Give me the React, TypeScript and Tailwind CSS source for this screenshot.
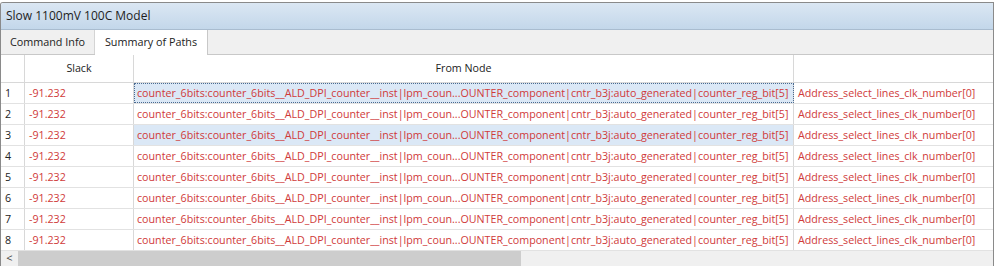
import React from "react";

const rows = [1, 2, 3, 4, 5, 6, 7, 8];
const node =
  "counter_6bits:counter_6bits__ALD_DPI_counter__inst|lpm_coun...OUNTER_component|cntr_b3j:auto_generated|counter_reg_bit[5]";

export default function App() {
  return (
    <div
      className="w-[999px] h-[266px] bg-white overflow-hidden"
      style={{ fontFamily: '"Open Sans", "Noto Sans", sans-serif' }}
    >
      <div className="mt-[2px] w-[994px] h-[264px] border-l border-t border-r border-[#8a8a8a] rounded-tl-[3px] flex flex-col overflow-hidden">
        <div className="h-[27px] shrink-0 bg-gradient-to-b from-[#dbe7f3] to-[#c3d7ea] border-b border-[#a9bccf] flex items-center pl-[5px] text-[12px] text-[#1e1e1e]">
          Slow 1100mV 100C Model
        </div>
        <div className="h-[25px] shrink-0 bg-[#f0f0f0] border-b border-[#c8c8c8] flex items-end text-[10.8px] text-[#222]">
          <div className="h-[24px] w-[94px] flex items-center justify-center border-r border-[#d4d4d4]">Command Info</div>
          <div className="h-[25px] w-[113px] flex items-center justify-center bg-white border-r border-[#c8c8c8] -mb-px">Summary of Paths</div>
        </div>
        <div className="flex-1 flex flex-col text-[10.7px]">
          <div className="h-[28px] shrink-0 flex border-b border-[#d8d8d8] text-[#222]">
            <div className="w-[24px] border-r border-[#d8d8d8]" />
            <div className="w-[109px] border-r border-[#d8d8d8] flex items-center justify-center">Slack</div>
            <div className="w-[660px] border-r border-[#d8d8d8] flex items-center justify-center">From Node</div>
            <div className="flex-1" />
          </div>
          {rows.map((r) => {
            const hl = r === 1 || r === 3;
            return (
              <div key={r} className="h-[21px] shrink-0 flex border-b border-[#e2e2e2] text-[#d03a3a]">
                <div className="w-[24px] border-r border-[#d8d8d8] flex items-center pl-[4px] text-[#222]">{r}</div>
                <div className="w-[109px] border-r border-[#d8d8d8] flex items-center pl-[4px]">-91.232</div>
                <div
                  className={
                    "w-[660px] border-r border-[#d8d8d8] flex items-center pl-[3px] whitespace-nowrap overflow-hidden " +
                    (hl ? "bg-[#dbe8f6] " : "") +
                    (r === 1 ? "outline outline-1 outline-dotted outline-[#4a6a90] -outline-offset-1" : "")
                  }
                >
                  {node}
                </div>
                <div className="flex-1 flex items-center pl-[4px] whitespace-nowrap overflow-hidden">Address_select_lines_clk_number[0]</div>
              </div>
            );
          })}
          <div className="h-[15px] shrink-0 flex bg-[#f0f0f0]">
            <div className="w-[17px] flex items-center justify-center text-[11px] text-[#444]">&lt;</div>
            <div className="w-[503px] bg-[#cdcdcd]" />
            <div className="flex-1" />
          </div>
        </div>
      </div>
    </div>
  );
}
